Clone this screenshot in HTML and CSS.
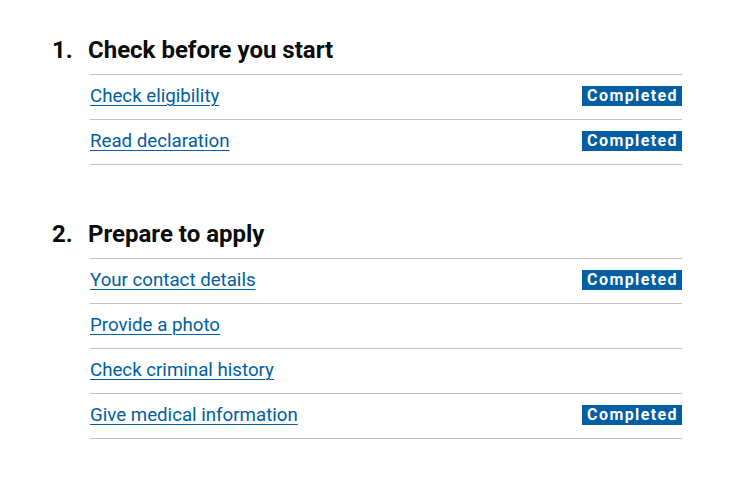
FILE: index.html
```html
<!DOCTYPE html>
<html lang="en">
<head>
<meta charset="utf-8">
<title>Task list</title>
<link rel="stylesheet" href="styles.css">
</head>
<body>
<ol class="task-list">
  <li class="section">
    <h2 class="section-heading"><span class="section-number">1.</span>Check before you start</h2>
    <ul class="items">
      <li class="item"><a class="item-name" href="#">Check eligibility</a><strong class="tag">Completed</strong></li>
      <li class="item"><a class="item-name" href="#">Read declaration</a><strong class="tag">Completed</strong></li>
    </ul>
  </li>
  <li class="section">
    <h2 class="section-heading"><span class="section-number">2.</span>Prepare to apply</h2>
    <ul class="items">
      <li class="item"><a class="item-name" href="#">Your contact details</a><strong class="tag">Completed</strong></li>
      <li class="item"><a class="item-name" href="#">Provide a photo</a></li>
      <li class="item"><a class="item-name" href="#">Check criminal history</a></li>
      <li class="item"><a class="item-name" href="#">Give medical information</a><strong class="tag">Completed</strong></li>
    </ul>
  </li>
</ol>
</body>
</html>
```
FILE: styles.css
```css
html, body {
  margin: 0;
  padding: 0;
  background: #ffffff;
}

body {
  font-family: Roboto, "Liberation Sans", Arial, sans-serif;
  color: #0b0c0c;
}

.task-list {
  list-style: none;
  margin: 0 68px 0 52px;
  padding: 35px 0 0 0;
}

.section {
  margin: 0 0 54px 0;
}

.section-heading {
  display: flex;
  margin: 0 0 9px 0;
  font-size: 24px;
  line-height: 30px;
  font-weight: 700;
}

.section-number {
  width: 36px;
  flex: none;
}

.items {
  list-style: none;
  margin: 0 0 0 38px;
  padding: 0;
  border-top: 1px solid #bfc1c3;
}

.item {
  display: flex;
  align-items: center;
  justify-content: space-between;
  height: 44px;
  border-bottom: 1px solid #bfc1c3;
}

.item-name {
  font-size: 18.7px;
  line-height: 24px;
  margin-top: -2px;
  color: #005ea5;
  text-decoration: underline;
  text-underline-offset: 3px;
  text-decoration-thickness: 1px;
}

.tag {
  display: block;
  background: #005ea5;
  color: #ffffff;
  font-size: 16px;
  line-height: 20px;
  font-weight: 700;
  letter-spacing: 1.4px;
  padding: 0 4px 0 5px;
  margin-top: -2px;
}
```
